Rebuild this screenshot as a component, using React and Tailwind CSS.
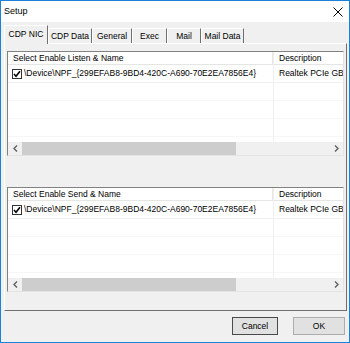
import React from "react";

const tabs = [
  { label: "CDP NIC", width: "w-[44px]", active: true },
  { label: "CDP Data", width: "w-[44px]" },
  { label: "General", width: "w-[40px]" },
  { label: "Exec", width: "w-[35px]" },
  { label: "Mail", width: "w-[34px]" },
  { label: "Mail Data", width: "w-[43px]" },
];

const deviceName = "\\Device\\NPF_{299EFAB8-9BD4-420C-A690-70E2EA7856E4}";

function Chevron({ dir }) {
  return (
    <svg width="5" height="7" viewBox="0 0 5 7">
      <path
        d={dir === "left" ? "M4 0.5 L1 3.5 L4 6.5" : "M1 0.5 L4 3.5 L1 6.5"}
        fill="none"
        stroke="#606060"
        strokeWidth="1.4"
      />
    </svg>
  );
}

function CheckBox() {
  return (
    <span className="flex h-[10px] w-[10px] items-center justify-center border border-[#333] bg-white">
      <svg width="8" height="8" viewBox="0 0 8 8">
        <path d="M1 4 L3 6.2 L7 1.3" fill="none" stroke="#000" strokeWidth="1.6" />
      </svg>
    </span>
  );
}

function ListBox({ title }) {
  const blanks = [1, 2, 3];
  return (
    <div className="flex h-[105px] flex-col border border-t-[#828282] border-l-[#828282] border-r-[#e3e3e3] border-b-[#e3e3e3] bg-white">
      <div className="flex flex-1 overflow-hidden">
        <div className="flex w-[266px] shrink-0 flex-col border-r border-[#f0f0f0]">
          <div className="h-[13px] border-b border-r border-[#e5e5e5] pl-[5px] leading-[12px]">
            {title}
          </div>
          <div className="flex h-[18px] items-center border-b border-[#f0f0f0] pl-[4px]">
            <CheckBox />
            <span className="ml-[2px] whitespace-nowrap">{deviceName}</span>
          </div>
          {blanks.map((b) => (
            <div key={b} className="h-[18px] border-b border-[#f6f6f6]" />
          ))}
        </div>
        <div className="flex min-w-0 flex-1 flex-col">
          <div className="h-[13px] border-b border-[#e5e5e5] pl-[5px] leading-[12px] whitespace-nowrap">
            Description
          </div>
          <div className="flex h-[18px] items-center border-b border-[#f0f0f0] pl-[5px] whitespace-nowrap">
            Realtek PCIe GB
          </div>
          {blanks.map((b) => (
            <div key={b} className="h-[18px] border-b border-[#f6f6f6]" />
          ))}
        </div>
      </div>
      <div className="flex h-[13px] shrink-0 bg-[#f0f0f0]">
        <div className="flex w-[14px] items-center justify-center">
          <Chevron dir="left" />
        </div>
        <div className="w-[214px] bg-[#cdcdcd]" />
        <div className="flex-1" />
        <div className="flex w-[14px] items-center justify-center">
          <Chevron dir="right" />
        </div>
      </div>
    </div>
  );
}

export default function App() {
  return (
    <div className="flex h-[343px] w-[350px] flex-col border border-[#1a82d8] bg-[#f0f0f0] font-['Liberation_Sans',Arial,sans-serif] text-[8.5px] text-black">
      <div className="flex h-[21px] shrink-0 items-center justify-between bg-white pl-[3px] pr-[6px]">
        <span className="text-[9px]">Setup</span>
        <svg width="10" height="10" viewBox="0 0 10 10">
          <path d="M0.5 0.5 L9.5 9.5 M9.5 0.5 L0.5 9.5" stroke="#000" strokeWidth="1" />
        </svg>
      </div>

      <div className="flex items-end pl-[3px] pt-[3px]">
        {tabs.map((tab) =>
          tab.active ? (
            <div
              key={tab.label}
              className={`${tab.width} relative z-10 -mb-px flex h-[19px] items-center justify-center border-l border-t border-r border-l-white border-t-white border-r-[#6f6f6f] bg-[#f0f0f0] pb-[2px]`}
            >
              {tab.label}
            </div>
          ) : (
            <div
              key={tab.label}
              className={`${tab.width} flex h-[15px] items-center justify-center border-l border-t border-r border-l-white border-t-white border-r-[#6f6f6f] bg-[#f0f0f0]`}
            >
              {tab.label}
            </div>
          )
        )}
      </div>

      <div className="ml-[3px] mr-[2px] flex h-[268px] flex-col border border-t-white border-l-white border-r-[#6f6f6f] border-b-[#6f6f6f] px-[2px] pt-[7px]">
        <ListBox title="Select Enable Listen & Name" />
        <div className="h-[31px]" />
        <ListBox title="Select Enable Send & Name" />
      </div>

      <div className="mt-[6px] flex justify-end gap-[15px] pr-[4px]">
        <button className="h-[18px] w-[46px] border border-[#4a4a4a] bg-[#e1e1e1] text-[8.5px]">
          Cancel
        </button>
        <button className="h-[18px] w-[52px] border border-[#adadad] bg-[#e1e1e1] text-[8.5px]">
          OK
        </button>
      </div>
    </div>
  );
}
